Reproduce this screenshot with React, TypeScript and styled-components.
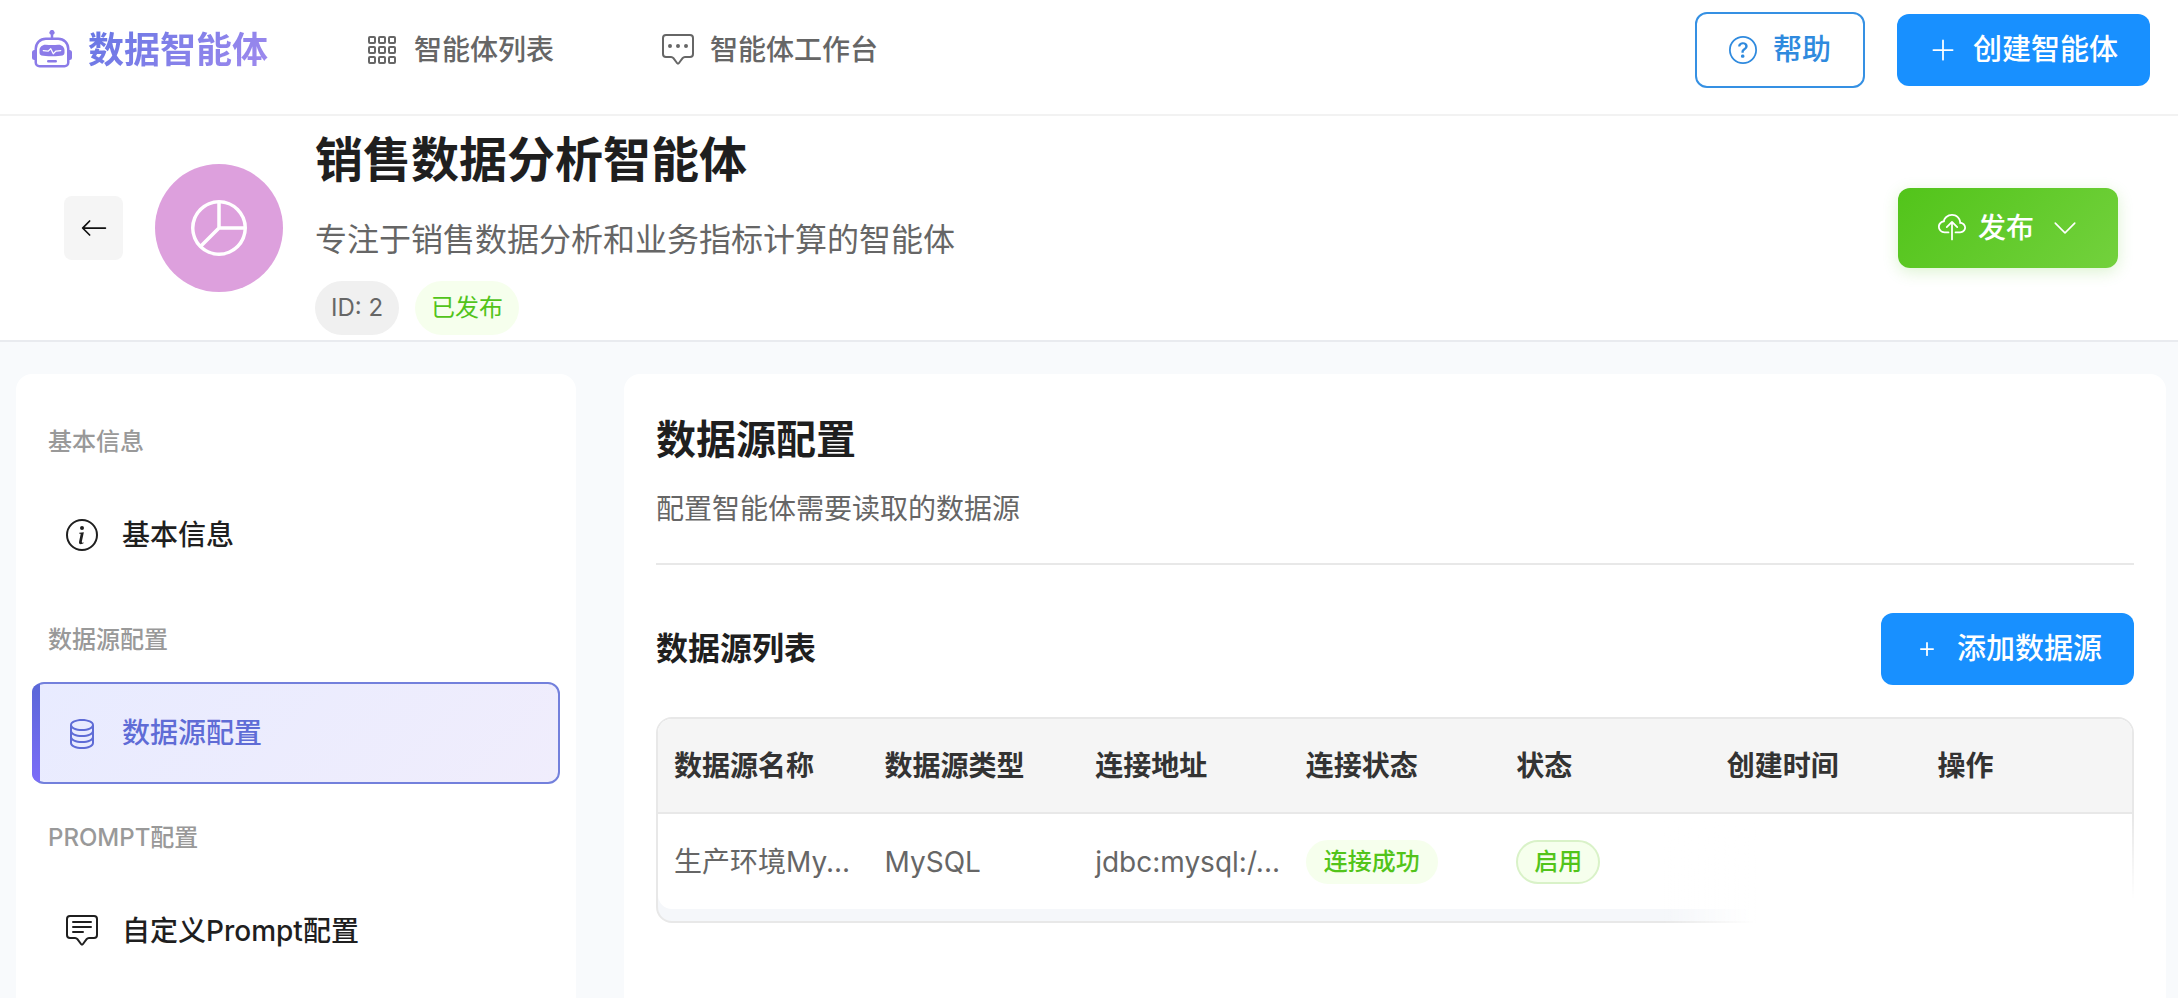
import React from "react";
import styled, { createGlobalStyle, css } from "styled-components";
import {
  BsArrowLeft,
  BsChatSquareDots,
  BsChatSquareText,
  BsChevronDown,
  BsCloudUpload,
  BsDatabase,
  BsGrid3X3Gap,
  BsInfoCircle,
  BsPieChart,
  BsPlus,
  BsPlusLg,
  BsQuestionCircle,
  BsRobot,
} from "react-icons/bs";

const GlobalStyle = createGlobalStyle`
  *, *::before, *::after { box-sizing: border-box; }
  body {
    margin: 0;
    background: #f8fafc;
    color: #1f1f1f;
    font-family: Inter, "Noto Sans CJK SC", sans-serif;
    font-size: 28px;
    line-height: 40px;
  }
  h1, h2, h3, p { margin: 0; }
  a { color: inherit; text-decoration: none; }
  button { font-family: inherit; cursor: pointer; }
  svg { flex: none; display: block; }
`;

const Page = styled.div`
  display: flex;
  flex-direction: column;
  min-height: 100vh;
`;

const TopBar = styled.header`
  display: flex;
  align-items: center;
  padding: 12px 28px 26px 32px;
  background: #fff;
  border-bottom: 2px solid #f2f2f2;
`;

const Brand = styled.a`
  display: flex;
  align-items: center;
  gap: 16px;
  color: #8b7be8;
`;

const BrandName = styled.span`
  font-size: 36px;
  font-weight: 600;
  line-height: 52px;
  background: linear-gradient(135deg, #6676e4, #a08aee);
  background-clip: text;
  color: transparent;
`;

const Nav = styled.nav`
  display: flex;
  gap: 108px;
  margin-left: 98px;
`;

const NavLink = styled.a`
  display: flex;
  align-items: center;
  gap: 16px;
  font-weight: 500;
  color: #666;
`;

const Actions = styled.div`
  display: flex;
  align-items: center;
  gap: 32px;
  margin-left: auto;
`;

const Button = styled.button<{ $outline?: boolean }>`
  display: flex;
  align-items: center;
  gap: 16px;
  padding: 16px 32px;
  border: 0;
  border-radius: 12px;
  background: #1890ff;
  color: #fff;
  font-size: 29px;
  font-weight: 500;
  line-height: 40px;
  ${(p) =>
    p.$outline &&
    css`
      border: 2px solid #3590e3;
      background: #fff;
      color: #2f8ade;
    `}
`;

const AgentHeader = styled.section`
  display: flex;
  align-items: center;
  gap: 32px;
  padding: 5px 60px 5px 64px;
  background: #fff;
  border-bottom: 2px solid #e9ebef;
`;

const BackButton = styled.button`
  display: grid;
  place-items: center;
  width: 59px;
  height: 64px;
  padding: 0;
  border: 0;
  border-radius: 8px;
  background: #f5f5f5;
  color: #111;
`;

const Avatar = styled.div`
  display: grid;
  place-items: center;
  width: 128px;
  height: 128px;
  border-radius: 50%;
  background: #dda0dd;
  color: #fff;
`;

const AgentInfo = styled.div`
  display: flex;
  flex: 1;
  flex-direction: column;
  gap: 17px;
`;

const AgentName = styled.h1`
  font-size: 48px;
  font-weight: 600;
  line-height: 78px;
`;

const AgentText = styled.p`
  font-size: 32px;
  line-height: 48px;
  color: #666;
`;

const TagRow = styled.div`
  display: flex;
  gap: 16px;
`;

const Tag = styled.span<{ $tone: "grey" | "green" }>`
  padding: 9px 16px;
  border-radius: 27px;
  font-size: 24px;
  line-height: 36px;
  background: ${(p) => (p.$tone === "grey" ? "#f0f0f0" : "#f6ffed")};
  color: ${(p) => (p.$tone === "grey" ? "#666" : "#52c41a")};
`;

const PublishButton = styled.button`
  display: flex;
  align-items: center;
  padding: 20px 40px;
  border: 0;
  border-radius: 12px;
  background: linear-gradient(135deg, #52c41a, #73d13d);
  box-shadow: 0 4px 16px rgba(82, 196, 26, 0.2);
  color: #fff;
  font-size: 28px;
  font-weight: 500;
  line-height: 40px;
`;

const PublishLabel = styled.span`
  margin: 0 18px 0 12px;
`;

const Content = styled.div`
  display: flex;
  flex: 1;
  gap: 48px;
  padding: 32px 12px 0 16px;
`;

const Sidebar = styled.aside`
  flex: none;
  width: 560px;
  padding: 50px 16px 16px;
  border-radius: 16px 16px 0 0;
  background: #fff;
`;

const MenuTitle = styled.h3`
  margin: 36px 0 24px 16px;
  font-size: 24px;
  font-weight: 500;
  line-height: 36px;
  color: #999;
  &:first-child { margin-top: 0; }
`;

const MenuLink = styled.a<{ $active?: boolean }>`
  position: relative;
  display: flex;
  align-items: center;
  gap: 24px;
  padding: 29px 32px;
  border: 2px solid transparent;
  border-radius: 12px;
  font-weight: 500;
  ${(p) =>
    p.$active &&
    css`
      border-color: #7380dc;
      background: linear-gradient(135deg, #e8ebff, #f0edfc);
      color: #5f6cd6;
      &::before {
        content: "";
        position: absolute;
        inset: 0 auto 0 -2px;
        width: 8px;
        border-radius: 8px 0 0 8px;
        background: linear-gradient(#5a67d8, #7c6cf8);
      }
    `}
`;

const Panel = styled.main`
  flex: 1;
  min-width: 0;
  padding: 32px;
  border-radius: 16px 16px 0 0;
  background: #fff;
`;

const PanelHead = styled.div`
  padding-bottom: 34px;
  border-bottom: 2px solid #e8e8e8;
`;

const PanelTitle = styled.h2`
  margin-bottom: 15px;
  font-size: 40px;
  font-weight: 600;
  line-height: 68px;
`;

const PanelText = styled.p`
  color: #666;
`;

const ListHead = styled.div`
  display: flex;
  align-items: center;
  justify-content: space-between;
  margin: 48px 0 32px;
`;

const ListTitle = styled.h3`
  font-size: 32px;
  font-weight: 600;
  line-height: 48px;
`;

const TableFrame = styled.div`
  position: relative;
  padding-bottom: 12px;
  border: 2px solid #e8e8e8;
  border-radius: 16px;
  background: #f5f7fa;
  &::after {
    content: "";
    position: absolute;
    right: -2px;
    bottom: -2px;
    width: 32%;
    height: 108px;
    background: linear-gradient(90deg, transparent, #fff 20%);
    mask-image: linear-gradient(transparent, #000 80%);
  }
`;

const Table = styled.table`
  width: 100%;
  border-collapse: separate;
  border-spacing: 0;
  table-layout: fixed;
  border-radius: 14px;
  overflow: hidden;
  background: #fff;
`;

const HeadCell = styled.th`
  padding: 27px 16px 26px;
  border-bottom: 2px solid #e8e8e8;
  background: #f5f5f5;
  color: #333;
  font-weight: 600;
  text-align: left;
`;

const Cell = styled.td`
  height: 95px;
  padding: 0 16px;
  color: #666;
  white-space: nowrap;
`;

const Status = styled.span<{ $bordered?: boolean }>`
  display: inline-block;
  padding: 2px 16px;
  border: 2px solid ${(p) => (p.$bordered ? "#d9f2c8" : "#f6ffed")};
  border-radius: 22px;
  background: #f6ffed;
  color: #52c41a;
  font-size: 24px;
  font-weight: 500;
  line-height: 36px;
  vertical-align: middle;
`;

const columns = ["数据源名称", "数据源类型", "连接地址", "连接状态", "状态", "创建时间", "操作"];

const menu = [
  { title: "基本信息", label: "基本信息", Icon: BsInfoCircle },
  { title: "数据源配置", label: "数据源配置", Icon: BsDatabase, active: true },
  { title: "PROMPT配置", label: "自定义Prompt配置", Icon: BsChatSquareText },
];

export default function App() {
  return (
    <Page>
      <GlobalStyle />
      <TopBar>
        <Brand href="#">
          <BsRobot size={40} />
          <BrandName>数据智能体</BrandName>
        </Brand>
        <Nav>
          <NavLink href="#agents">
            <BsGrid3X3Gap size={32} />
            智能体列表
          </NavLink>
          <NavLink href="#workspace">
            <BsChatSquareDots size={32} />
            智能体工作台
          </NavLink>
        </Nav>
        <Actions>
          <Button type="button" $outline>
            <BsQuestionCircle size={28} />
            帮助
          </Button>
          <Button type="button">
            <BsPlusLg size={28} />
            创建智能体
          </Button>
        </Actions>
      </TopBar>

      <AgentHeader>
        <BackButton type="button" aria-label="返回">
          <BsArrowLeft size={28} />
        </BackButton>
        <Avatar>
          <BsPieChart size={56} />
        </Avatar>
        <AgentInfo>
          <AgentName>销售数据分析智能体</AgentName>
          <AgentText>专注于销售数据分析和业务指标计算的智能体</AgentText>
          <TagRow>
            <Tag $tone="grey">ID: 2</Tag>
            <Tag $tone="green">已发布</Tag>
          </TagRow>
        </AgentInfo>
        <PublishButton type="button">
          <BsCloudUpload size={28} />
          <PublishLabel>发布</PublishLabel>
          <BsChevronDown size={26} />
        </PublishButton>
      </AgentHeader>

      <Content>
        <Sidebar>
          {menu.map(({ title, label, Icon, active }) => (
            <React.Fragment key={title}>
              <MenuTitle>{title}</MenuTitle>
              <MenuLink href={`#${label}`} $active={active}>
                <Icon size={32} />
                {label}
              </MenuLink>
            </React.Fragment>
          ))}
        </Sidebar>

        <Panel>
          <PanelHead>
            <PanelTitle>数据源配置</PanelTitle>
            <PanelText>配置智能体需要读取的数据源</PanelText>
          </PanelHead>
          <ListHead>
            <ListTitle>数据源列表</ListTitle>
            <Button type="button">
              <BsPlus size={28} />
              添加数据源
            </Button>
          </ListHead>
          <TableFrame>
            <Table>
              <thead>
                <tr>
                  {columns.map((name) => (
                    <HeadCell key={name} scope="col">
                      {name}
                    </HeadCell>
                  ))}
                </tr>
              </thead>
              <tbody>
                <tr>
                  <Cell>生产环境My...</Cell>
                  <Cell>MySQL</Cell>
                  <Cell>jdbc:mysql:/...</Cell>
                  <Cell>
                    <Status>连接成功</Status>
                  </Cell>
                  <Cell>
                    <Status $bordered>启用</Status>
                  </Cell>
                  <Cell />
                  <Cell />
                </tr>
              </tbody>
            </Table>
          </TableFrame>
        </Panel>
      </Content>
    </Page>
  );
}
